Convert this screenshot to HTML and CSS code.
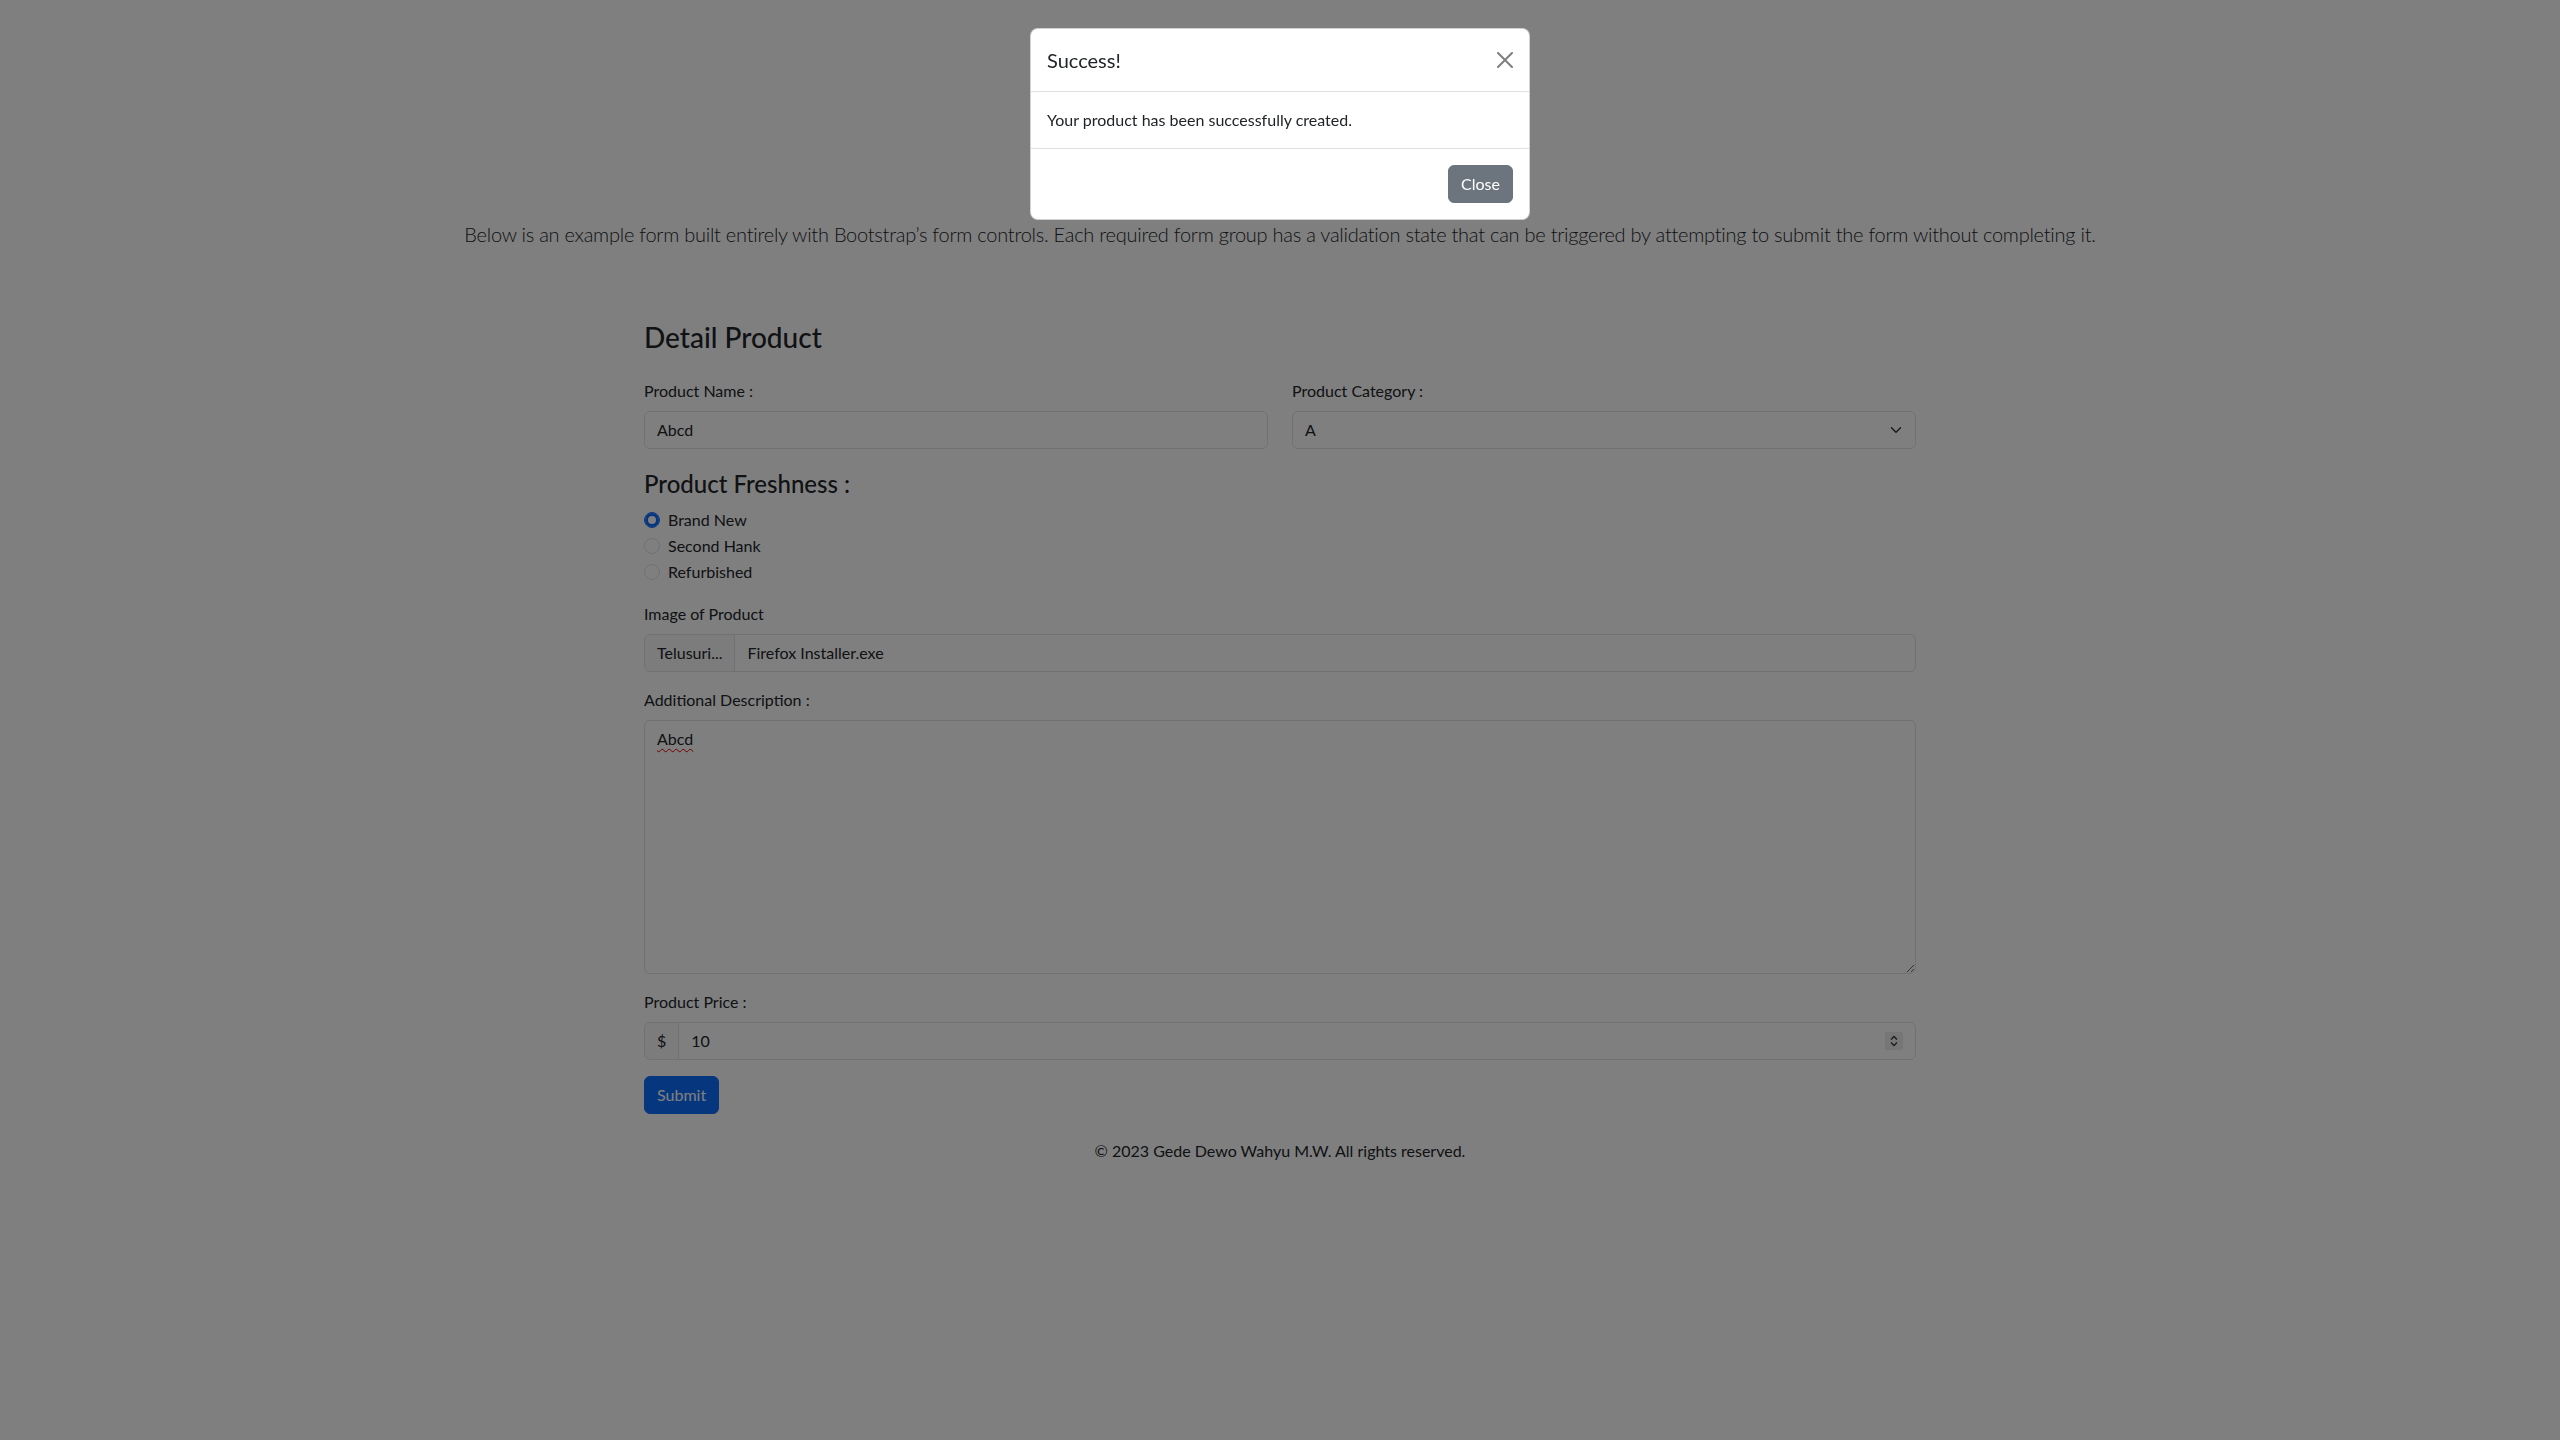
FILE: index.html
```html
<!DOCTYPE html>
<html lang="en">
<head>
<meta charset="utf-8">
<title>Create Product</title>
<link rel="stylesheet" href="styles.css">
</head>
<body>
<header class="intro">
  <p class="lead">Below is an example form built entirely with Bootstrap’s form controls. Each required form group has a validation state that can be triggered by attempting to submit the form without completing it.</p>
</header>

<main class="container">
  <h3 class="page-title">Detail Product</h3>
  <div class="row">
    <div class="field">
      <label class="form-label" for="pname">Product Name :</label>
      <input class="form-control" id="pname" type="text" value="Abcd">
    </div>
    <div class="field">
      <label class="form-label" for="pcat">Product Category :</label>
      <div class="select-wrap">
        <select class="form-select" id="pcat">
          <option>A</option>
          <option>B</option>
          <option>C</option>
        </select>
        <svg class="select-arrow" viewBox="0 0 16 16" width="16" height="12" aria-hidden="true"><path d="m2 5 6 6 6-6" fill="none" stroke="#343a40" stroke-width="2" stroke-linecap="round" stroke-linejoin="round"/></svg>
      </div>
    </div>
  </div>

  <h4 class="section-title">Product Freshness :</h4>
  <div class="radios">
    <div class="form-check"><input class="form-check-input" type="radio" name="fresh" id="r1" checked><label for="r1">Brand New</label></div>
    <div class="form-check"><input class="form-check-input" type="radio" name="fresh" id="r2"><label for="r2">Second Hank</label></div>
    <div class="form-check"><input class="form-check-input" type="radio" name="fresh" id="r3"><label for="r3">Refurbished</label></div>
  </div>

  <div class="group">
    <label class="form-label">Image of Product</label>
    <div class="file-control">
      <span class="file-btn">Telusuri...</span>
      <span class="file-name">Firefox Installer.exe</span>
    </div>
  </div>

  <div class="group">
    <label class="form-label" for="desc">Additional Description :</label>
    <textarea class="form-control desc" id="desc" rows="10" spellcheck="true">Abcd</textarea>
  </div>

  <div class="group">
    <label class="form-label" for="price">Product Price :</label>
    <div class="input-group">
      <span class="input-group-text">$</span>
      <div class="number-box">
        <input class="number-input" id="price" type="text" value="10">
        <span class="spinner" aria-hidden="true">
          <svg viewBox="0 0 18 18" width="18" height="18"><path d="M6 7.5 9 4.5 12 7.5M6 10.5 9 13.5 12 10.5" fill="none" stroke="#3a3a3a" stroke-width="1.4"/></svg>
        </span>
      </div>
    </div>
  </div>

  <button class="btn btn-primary" type="button">Submit</button>

  <footer class="footer">© 2023 Gede Dewo Wahyu M.W. All rights reserved.</footer>
</main>

<div class="modal-backdrop"></div>
<div class="modal" role="dialog" aria-modal="true">
  <div class="modal-content">
    <div class="modal-header">
      <h5 class="modal-title">Success!</h5>
      <button class="btn-close" type="button" aria-label="Close">
        <svg viewBox="0 0 16 16" width="16" height="16"><path d="M.293.293a1 1 0 0 1 1.414 0L8 6.586 14.293.293a1 1 0 1 1 1.414 1.414L9.414 8l6.293 6.293a1 1 0 0 1-1.414 1.414L8 9.414l-6.293 6.293a1 1 0 0 1-1.414-1.414L6.586 8 .293 1.707a1 1 0 0 1 0-1.414z" fill="#000"/></svg>
      </button>
    </div>
    <div class="modal-body">Your product has been successfully created.</div>
    <div class="modal-footer">
      <button class="btn btn-secondary" type="button">Close</button>
    </div>
  </div>
</div>
</body>
</html>
```

FILE: styles.css
```css
* { box-sizing: border-box; }
html, body { margin: 0; padding: 0; }
body {
  font-family: Lato, "Noto Sans", "Liberation Sans", sans-serif;
  font-size: 16px;
  line-height: 1.5;
  color: #212529;
  background: #fff;
  min-height: 1440px;
}

.intro { padding-top: 219px; text-align: center; }
.lead { margin: 0; font-size: 20px; font-weight: 300; line-height: 30px; letter-spacing: -0.25px; }

.container { width: 1272px; margin: 72px auto 0; }

.page-title {
  margin: 0 0 24px;
  font-size: 28px;
  font-weight: 500;
  line-height: 1.2;
}
.section-title {
  margin: 21px 0 10px;
  font-size: 24px;
  font-weight: 500;
  line-height: 1.2;
}

.row { display: grid; grid-template-columns: 1fr 1fr; column-gap: 24px; }
.form-label { display: block; margin-bottom: 8px; line-height: 24px; }

.form-control, .form-select {
  display: block;
  width: 100%;
  padding: 6px 12px;
  font: inherit;
  font-size: 16px;
  line-height: 24px;
  color: #212529;
  background: #fff;
  border: 1px solid #dee2e6;
  border-radius: 6px;
  outline: none;
}
.select-wrap { position: relative; }
.form-select { appearance: none; -webkit-appearance: none; padding-right: 36px; height: 38px; }
.select-arrow { position: absolute; right: 12px; top: 13px; pointer-events: none; }

.radios { margin-bottom: 18px; }
.form-check { display: flex; align-items: flex-start; min-height: 24px; margin-bottom: 2px; line-height: 24px; }
.form-check-input {
  appearance: none; -webkit-appearance: none;
  width: 16px; height: 16px; margin: 4px 8px 0 0;
  border: 1px solid #dee2e6; border-radius: 50%; background: #fff;
  flex-shrink: 0;
}
.form-check-input:checked { border-color: #0d6efd; box-shadow: inset 0 0 0 3px #0d6efd; }

.group { margin-bottom: 16px; }

.file-control {
  display: flex; align-items: stretch;
  height: 38px;
  border: 1px solid #dee2e6; border-radius: 6px; background: #fff;
  overflow: hidden;
}
.file-btn {
  padding: 6px 12px; background: #f8f9fa; border-right: 1px solid #dee2e6;
  line-height: 24px;
}
.file-name { padding: 6px 12px; line-height: 24px; }

.desc {
  resize: vertical;
  height: 254px;
  text-decoration: underline wavy #e00000;
  text-decoration-thickness: 1px;
  text-underline-offset: 3px;
  text-decoration-skip-ink: none;
}

.input-group { display: flex; height: 38px; }
.input-group-text {
  padding: 6px 12px; line-height: 24px;
  background: #f8f9fa; border: 1px solid #dee2e6;
  border-radius: 6px 0 0 6px;
}
.number-box {
  flex: 1; display: flex; align-items: center;
  margin-left: -1px; padding: 0 12px;
  border: 1px solid #dee2e6; border-radius: 0 6px 6px 0; background: #fff;
}
.number-input {
  flex: 1; border: 0; outline: none; padding: 0; background: transparent;
  font: inherit; font-size: 16px; line-height: 24px; color: #212529;
}
.spinner { display: flex; width: 18px; height: 18px; background: #ededed; }

.btn {
  display: inline-block; padding: 6px 12px;
  font: inherit; font-size: 16px; line-height: 24px;
  border: 1px solid transparent; border-radius: 6px; cursor: pointer;
}
.btn-primary { color: #fff; background: #0d6efd; border-color: #0d6efd; }
.btn-secondary { color: #fff; background: #6c757d; border-color: #6c757d; margin: 4px; }

.footer { margin-top: 25px; text-align: center; line-height: 24px; }

.modal-backdrop { position: fixed; inset: 0; background: #000; opacity: .5; }
.modal { position: fixed; top: 0; left: 0; right: 0; }
.modal-content {
  width: 500px; margin: 28px auto 0;
  background: #fff; border: 1px solid rgba(0,0,0,.175); border-radius: 8px;
  overflow: hidden;
}
.modal-header {
  display: flex; align-items: center; justify-content: space-between;
  padding: 16px; border-bottom: 1px solid #dee2e6;
}
.modal-title { margin: 0; font-size: 20px; font-weight: 400; line-height: 30px; }
.btn-close {
  display: flex; align-items: center; justify-content: center;
  width: 32px; height: 32px; padding: 8px; margin: -8px -8px -8px auto;
  border: 0; background: transparent; opacity: .5; cursor: pointer;
}
.btn-close svg { width: 16px; height: 16px; display: block; }
.modal-body { padding: 16px; }
.modal-footer {
  display: flex; justify-content: flex-end; align-items: center;
  padding: 12px; border-top: 1px solid #dee2e6;
}
```
